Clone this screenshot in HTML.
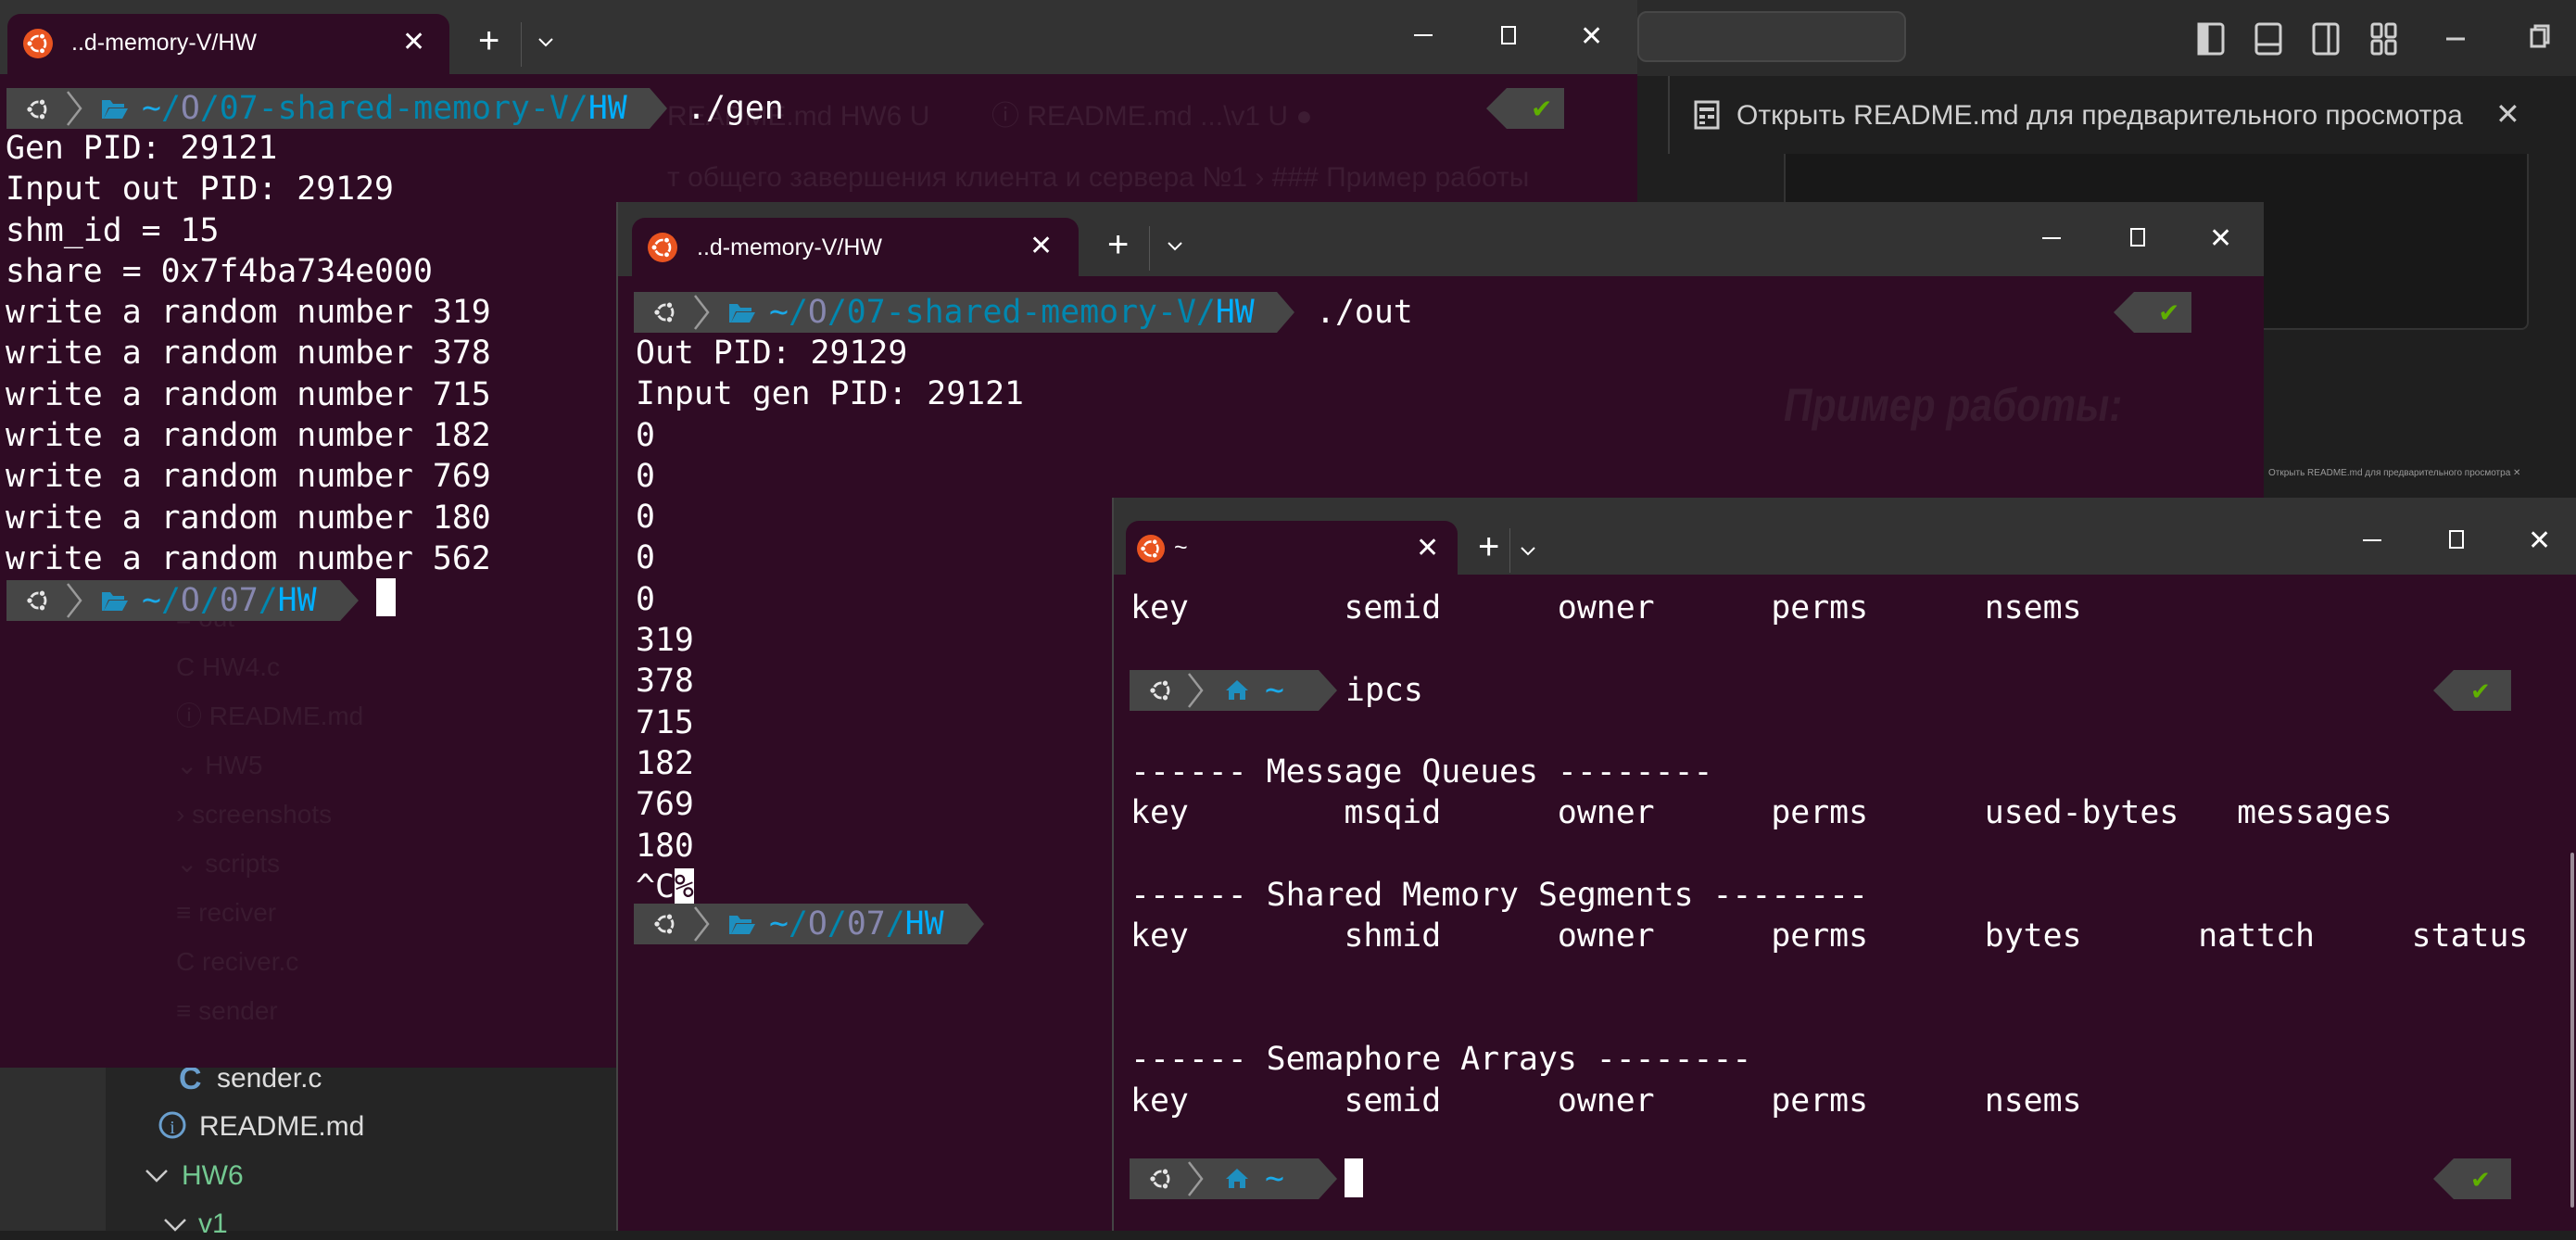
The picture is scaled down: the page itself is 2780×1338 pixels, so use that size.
<!DOCTYPE html>
<html><head><meta charset="utf-8"><style>
*{margin:0;padding:0;box-sizing:border-box}
body{width:2780px;height:1328px;overflow:hidden;background:#1f1f1f;position:relative;font-family:"Liberation Sans",sans-serif}
.abs{position:absolute}
.win{position:absolute;background:#2f0b24;overflow:hidden}
.tb{position:absolute;left:0;top:0;right:0;height:80px;background:#333333}
.tab{position:absolute;background:#2f0b24;border-radius:14px 14px 0 0}
.tt{position:absolute;color:#fff;font-size:25px;font-family:"Liberation Sans",sans-serif}
.mono{font-family:"DejaVu Sans Mono","Liberation Mono",monospace;font-size:34.8px;color:#fff;white-space:pre;line-height:44.3px}
.gx{position:absolute;color:#fff;font-size:30px;font-weight:300}
</style></head><body>

<div class="abs" style="left:1767px;top:0;width:1013px;height:82px;background:#2b2b2b"></div>
<div class="abs" style="left:1767px;top:12px;width:290px;height:55px;background:#383838;border:2px solid #474747;border-radius:10px"></div>
<svg class="abs" style="left:2370px;top:22px" width="400" height="40" viewBox="0 0 400 40">
<g fill="none" stroke="#cfcfcf" stroke-width="3">
<rect x="3" y="4" width="26" height="32" rx="3"/><rect x="3" y="4" width="9" height="32" fill="#cfcfcf"/>
<rect x="65" y="4" width="26" height="32" rx="3"/><line x1="65" y1="26" x2="91" y2="26"/>
<rect x="127" y="4" width="26" height="32" rx="3"/><line x1="143" y1="4" x2="143" y2="36"/>
<rect x="190" y="4" width="10" height="14" rx="2"/><rect x="190" y="22" width="10" height="14" rx="2"/><rect x="205" y="4" width="10" height="14" rx="2"/><rect x="205" y="22" width="10" height="14" rx="2"/>
<line x1="270" y1="20" x2="290" y2="20"/>
<rect x="362" y="10" width="14" height="18"/><path d="M366 10 V6 H380 V24 H376"/>
</g></svg>
<div class="abs" style="left:1800px;top:82px;width:940px;height:84px;background:#1f1f1f;border-left:2px solid #3a3a3a"></div>
<svg class="abs" style="left:1828px;top:108px" width="28" height="32" viewBox="0 0 28 32"><rect x="2" y="2" width="24" height="28" fill="none" stroke="#ccc" stroke-width="3"/><rect x="6" y="8" width="16" height="4" fill="#ccc"/><rect x="6" y="16" width="6" height="4" fill="#ccc"/><rect x="15" y="16" width="7" height="4" fill="#ccc"/><rect x="6" y="23" width="6" height="3" fill="#ccc"/></svg>
<div class="abs" style="left:1874px;top:108px;color:#d0d0d0;font-size:30px">Открыть README.md для предварительного просмотра</div>
<div class="abs" style="left:2693px;top:104px;color:#ccc;font-size:32px">✕</div>
<div class="abs" style="left:1925px;top:166px;width:804px;height:190px;background:#181818;border:2px solid #333;border-top:none;border-radius:0 0 8px 8px"></div>
<div class="abs" style="left:2448px;top:505px;color:#999;font-size:10px">Открыть README.md для предварительного просмотра ✕</div>

<div class="abs" style="left:0;top:1150px;width:114px;height:178px;background:#2f2f2f"></div>
<div class="abs" style="left:114px;top:1150px;width:560px;height:178px;background:#252525"></div>
<div class="abs" style="left:193px;top:1145px;color:#6a9fce;font-size:34px;font-weight:bold">C</div>
<div class="abs" style="left:234px;top:1147px;color:#ddd;font-size:30px">sender.c</div>
<svg class="abs" style="left:170px;top:1198px" width="32" height="32"><circle cx="16" cy="16" r="13" fill="none" stroke="#6a9fce" stroke-width="3"/><text x="16" y="25" fill="#6a9fce" font-size="20" text-anchor="middle" font-family="Liberation Serif">i</text></svg>
<div class="abs" style="left:215px;top:1199px;color:#ddd;font-size:30px">README.md</div>
<svg class="abs" style="left:155px;top:1260px" width="28" height="18"><path d="M3 3 L14 14 L25 3" fill="none" stroke="#ccc" stroke-width="2.5"/></svg>
<div class="abs" style="left:196px;top:1252px;color:#73c991;font-size:30px">HW6</div>
<svg class="abs" style="left:175px;top:1313px" width="28" height="18"><path d="M3 3 L14 14 L25 3" fill="none" stroke="#ccc" stroke-width="2.5"/></svg>
<div class="abs" style="left:214px;top:1304px;color:#73c991;font-size:30px">v1</div>

<!-- WINDOW 1 -->
<div class="win" style="left:0;top:0;width:1767px;height:1152px">
 <div class="tb"></div>
 <div class="tab" style="left:8px;top:15px;width:477px;height:65px"></div>
 <svg class="abs" style="left:25px;top:31px" width="32" height="32" viewBox="-16 -16 32 32"><circle r="16" fill="#e95420"/><circle r="8" fill="none" stroke="#fff" stroke-width="2.6"/><g fill="#fff" stroke="#e95420" stroke-width="1.5"><circle cx="-9" cy="0" r="3.2"/><circle cx="4.5" cy="-7.8" r="3.2"/><circle cx="4.5" cy="7.8" r="3.2"/></g></svg>
 <div class="tt" style="left:77px;top:32px">..d-memory-V/HW</div>
 <div class="gx" style="left:434px;top:28px">✕</div>
 <div class="gx" style="left:516px;top:22px;font-size:40px">+</div>
 <div class="abs" style="left:562px;top:24px;width:1px;height:48px;background:#555"></div>
 <svg class="abs" style="left:580px;top:40px" width="18" height="12"><path d="M2 2 L9 9 L16 2" fill="none" stroke="#fff" stroke-width="2"/></svg>
 <div class="abs" style="left:1526px;top:37px;width:20px;height:2px;background:#fff"></div>
 <div class="abs" style="left:1620px;top:28px;width:16px;height:20px;border:2px solid #fff"></div>
 <div class="gx" style="left:1705px;top:22px">✕</div>
 <div class="abs" style="left:720px;top:100px;color:#3d1c33;font-size:30px;white-space:nowrap">README.md  HW6 U &nbsp;&nbsp;&nbsp;&nbsp;&nbsp;&nbsp; ⓘ README.md ...\v1 U ●</div>
 <div class="abs" style="left:720px;top:175px;color:#3d1c33;font-size:30px;white-space:nowrap">т общего завершения клиента и сервера №1 › ### Пример работы</div>
 <div class="abs" style="left:190px;top:640px;color:#3a1a30;font-size:28px;line-height:53px">≡ out<br>C HW4.c<br>ⓘ README.md<br>⌄ HW5<br>› screenshots<br>⌄ scripts<br>≡ reciver<br>C reciver.c<br>≡ sender</div>
 <svg class="abs" style="left:7px;top:95px" width="720" height="44"><polygon points="0,0 694,0 713,22 694,44 0,44" fill="#464646"/><path d="M66 4 L80 22 L66 40" fill="none" stroke="#9a9a9a" stroke-width="2.5"/></svg>
 <svg class="abs" style="left:26px;top:103px" width="30" height="30" viewBox="-15 -15 30 30"><circle r="8" fill="none" stroke="#e6e6e6" stroke-width="2.8"/><g fill="#e6e6e6" stroke="#464646" stroke-width="1.5"><circle cx="-9" cy="0" r="3.4"/><circle cx="4.5" cy="-7.8" r="3.4"/><circle cx="4.5" cy="7.8" r="3.4"/></g></svg>
 <svg class="abs" style="left:110px;top:106px" width="28" height="22"><path d="M0 2 H9 L12 6 H24 V10 H7 L2 22 H0Z M8 11 H28 L22 22 H2Z" fill="#1e8fbf"/></svg>
 <div class="mono abs" style="left:153px;top:95px"><span style="color:#1aa9e8">~</span><span style="color:#0087af">/</span><span style="color:#8787af">O</span><span style="color:#0087af">/07-shared-memory-V/</span><span style="color:#00afff">HW</span></div>
 <div class="mono abs" style="left:741px;top:95px">./gen</div>
 <svg class="abs" style="left:1604px;top:95px" width="84" height="44"><polygon points="0,22 22,0 84,0 84,44 22,44" fill="#464646"/><text x="48" y="32" fill="#5faf00" font-size="28" font-family="DejaVu Sans">✔</text></svg>
 <div class="mono abs" style="left:6px;top:138px">Gen PID: 29121
Input out PID: 29129
shm_id = 15
share = 0x7f4ba734e000
write a random number 319
write a random number 378
write a random number 715
write a random number 182
write a random number 769
write a random number 180
write a random number 562</div>
 <svg class="abs" style="left:7px;top:626px" width="390" height="44"><polygon points="0,0 360,0 380,22 360,44 0,44" fill="#464646"/><path d="M66 4 L80 22 L66 40" fill="none" stroke="#9a9a9a" stroke-width="2.5"/></svg>
 <svg class="abs" style="left:26px;top:633px" width="30" height="30" viewBox="-15 -15 30 30"><circle r="8" fill="none" stroke="#e6e6e6" stroke-width="2.8"/><g fill="#e6e6e6" stroke="#464646" stroke-width="1.5"><circle cx="-9" cy="0" r="3.4"/><circle cx="4.5" cy="-7.8" r="3.4"/><circle cx="4.5" cy="7.8" r="3.4"/></g></svg>
 <svg class="abs" style="left:110px;top:637px" width="28" height="22"><path d="M0 2 H9 L12 6 H24 V10 H7 L2 22 H0Z M8 11 H28 L22 22 H2Z" fill="#1e8fbf"/></svg>
 <div class="mono abs" style="left:153px;top:626px"><span style="color:#1aa9e8">~</span><span style="color:#0087af">/</span><span style="color:#8787af">O</span><span style="color:#0087af">/</span><span style="color:#8787af">07</span><span style="color:#0087af">/</span><span style="color:#00afff">HW</span></div>
 <div class="abs" style="left:406px;top:624px;width:21px;height:41px;background:#fff"></div>
</div>

<!-- WINDOW 2 -->
<div class="win" style="left:665px;top:218px;width:1778px;height:1110px;border-left:2px solid #444">
 <div class="tb"></div>
 <div class="tab" style="left:15px;top:17px;width:482px;height:63px"></div>
 <svg class="abs" style="left:32px;top:33px" width="32" height="32" viewBox="-16 -16 32 32"><circle r="16" fill="#e95420"/><circle r="8" fill="none" stroke="#fff" stroke-width="2.6"/><g fill="#fff" stroke="#e95420" stroke-width="1.5"><circle cx="-9" cy="0" r="3.2"/><circle cx="4.5" cy="-7.8" r="3.2"/><circle cx="4.5" cy="7.8" r="3.2"/></g></svg>
 <div class="tt" style="left:85px;top:35px">..d-memory-V/HW</div>
 <div class="gx" style="left:444px;top:30px">✕</div>
 <div class="gx" style="left:528px;top:24px;font-size:40px">+</div>
 <div class="abs" style="left:573px;top:26px;width:1px;height:48px;background:#555"></div>
 <svg class="abs" style="left:592px;top:42px" width="18" height="12"><path d="M2 2 L9 9 L16 2" fill="none" stroke="#fff" stroke-width="2"/></svg>
 <div class="abs" style="left:1537px;top:38px;width:20px;height:2px;background:#fff"></div>
 <div class="abs" style="left:1632px;top:28px;width:16px;height:20px;border:2px solid #fff"></div>
 <div class="gx" style="left:1717px;top:22px">✕</div>
 <div class="abs" style="left:1258px;top:190px;color:#3a1a30;font-size:50px;font-style:italic;font-weight:bold;white-space:nowrap;transform:scaleX(0.85);transform-origin:left">Пример работы:</div>
 <svg class="abs" style="left:17px;top:97px" width="720" height="44"><polygon points="0,0 694,0 713,22 694,44 0,44" fill="#464646"/><path d="M66 4 L80 22 L66 40" fill="none" stroke="#9a9a9a" stroke-width="2.5"/></svg>
 <svg class="abs" style="left:36px;top:104px" width="30" height="30" viewBox="-15 -15 30 30"><circle r="8" fill="none" stroke="#e6e6e6" stroke-width="2.8"/><g fill="#e6e6e6" stroke="#464646" stroke-width="1.5"><circle cx="-9" cy="0" r="3.4"/><circle cx="4.5" cy="-7.8" r="3.4"/><circle cx="4.5" cy="7.8" r="3.4"/></g></svg>
 <svg class="abs" style="left:120px;top:108px" width="28" height="22"><path d="M0 2 H9 L12 6 H24 V10 H7 L2 22 H0Z M8 11 H28 L22 22 H2Z" fill="#1e8fbf"/></svg>
 <div class="mono abs" style="left:163px;top:97px"><span style="color:#1aa9e8">~</span><span style="color:#0087af">/</span><span style="color:#8787af">O</span><span style="color:#0087af">/07-shared-memory-V/</span><span style="color:#00afff">HW</span></div>
 <div class="mono abs" style="left:753px;top:97px">./out</div>
 <svg class="abs" style="left:1614px;top:97px" width="84" height="44"><polygon points="0,22 22,0 84,0 84,44 22,44" fill="#464646"/><text x="48" y="32" fill="#5faf00" font-size="28" font-family="DejaVu Sans">✔</text></svg>
 <div class="mono abs" style="left:19px;top:141px">Out PID: 29129
Input gen PID: 29121
0
0
0
0
0
319
378
715
182
769
180
^C<span style="background:#fff;color:#2f0b24">%</span></div>
 <svg class="abs" style="left:17px;top:757px" width="400" height="44"><polygon points="0,0 360,0 378,22 360,44 0,44" fill="#464646"/><path d="M66 4 L80 22 L66 40" fill="none" stroke="#9a9a9a" stroke-width="2.5"/></svg>
 <svg class="abs" style="left:36px;top:764px" width="30" height="30" viewBox="-15 -15 30 30"><circle r="8" fill="none" stroke="#e6e6e6" stroke-width="2.8"/><g fill="#e6e6e6" stroke="#464646" stroke-width="1.5"><circle cx="-9" cy="0" r="3.4"/><circle cx="4.5" cy="-7.8" r="3.4"/><circle cx="4.5" cy="7.8" r="3.4"/></g></svg>
 <svg class="abs" style="left:120px;top:768px" width="28" height="22"><path d="M0 2 H9 L12 6 H24 V10 H7 L2 22 H0Z M8 11 H28 L22 22 H2Z" fill="#1e8fbf"/></svg>
 <div class="mono abs" style="left:163px;top:757px"><span style="color:#1aa9e8">~</span><span style="color:#0087af">/</span><span style="color:#8787af">O</span><span style="color:#0087af">/</span><span style="color:#8787af">07</span><span style="color:#0087af">/</span><span style="color:#00afff">HW</span></div>
</div>

<!-- WINDOW 3 -->
<div class="win" style="left:1200px;top:537px;width:1580px;height:791px;border-left:2px solid #444">
 <div class="tb" style="height:83px"></div>
 <div class="tab" style="left:13px;top:25px;width:358px;height:60px"></div>
 <svg class="abs" style="left:25px;top:40px" width="30" height="30" viewBox="-16 -16 32 32"><circle r="16" fill="#e95420"/><circle r="8" fill="none" stroke="#fff" stroke-width="2.6"/><g fill="#fff" stroke="#e95420" stroke-width="1.5"><circle cx="-9" cy="0" r="3.2"/><circle cx="4.5" cy="-7.8" r="3.2"/><circle cx="4.5" cy="7.8" r="3.2"/></g></svg>
 <div class="tt" style="left:65px;top:40px">~</div>
 <div class="gx" style="left:326px;top:37px">✕</div>
 <div class="gx" style="left:393px;top:31px;font-size:40px">+</div>
 <div class="abs" style="left:427px;top:33px;width:1px;height:48px;background:#555"></div>
 <svg class="abs" style="left:438px;top:52px" width="18" height="12"><path d="M2 2 L9 9 L16 2" fill="none" stroke="#fff" stroke-width="2"/></svg>
 <div class="abs" style="left:1348px;top:45px;width:20px;height:2px;background:#fff"></div>
 <div class="abs" style="left:1441px;top:35px;width:16px;height:20px;border:2px solid #fff"></div>
 <div class="gx" style="left:1526px;top:29px">✕</div>
 <div class="mono abs" style="left:18px;top:97px">key        semid      owner      perms      nsems



------ Message Queues --------
key        msqid      owner      perms      used-bytes   messages

------ Shared Memory Segments --------
key        shmid      owner      perms      bytes      nattch     status


------ Semaphore Arrays --------
key        semid      owner      perms      nsems</div>
 <svg class="abs" style="left:17px;top:186px" width="240" height="44"><polygon points="0,0 204,0 224,22 204,44 0,44" fill="#464646"/><path d="M64 4 L78 22 L64 40" fill="none" stroke="#9a9a9a" stroke-width="2.5"/></svg>
 <svg class="abs" style="left:36px;top:193px" width="30" height="30" viewBox="-15 -15 30 30"><circle r="8" fill="none" stroke="#e6e6e6" stroke-width="2.8"/><g fill="#e6e6e6" stroke="#464646" stroke-width="1.5"><circle cx="-9" cy="0" r="3.4"/><circle cx="4.5" cy="-7.8" r="3.4"/><circle cx="4.5" cy="7.8" r="3.4"/></g></svg>
 <svg class="abs" style="left:120px;top:196px" width="26" height="22"><path d="M13 1 L1 12 H4 V22 H10 V15 H16 V22 H22 V12 H25Z" fill="#1e8fbf"/></svg>
 <div class="mono abs" style="left:163px;top:186px;color:#1aa9e8">~</div>
 <div class="mono abs" style="left:250px;top:186px">ipcs</div>
 <svg class="abs" style="left:1424px;top:186px" width="84" height="44"><polygon points="0,22 22,0 84,0 84,44 22,44" fill="#464646"/><text x="40" y="32" fill="#5faf00" font-size="26" font-family="DejaVu Sans">✔</text></svg>
 <svg class="abs" style="left:17px;top:713px" width="240" height="44"><polygon points="0,0 204,0 224,22 204,44 0,44" fill="#464646"/><path d="M64 4 L78 22 L64 40" fill="none" stroke="#9a9a9a" stroke-width="2.5"/></svg>
 <svg class="abs" style="left:36px;top:720px" width="30" height="30" viewBox="-15 -15 30 30"><circle r="8" fill="none" stroke="#e6e6e6" stroke-width="2.8"/><g fill="#e6e6e6" stroke="#464646" stroke-width="1.5"><circle cx="-9" cy="0" r="3.4"/><circle cx="4.5" cy="-7.8" r="3.4"/><circle cx="4.5" cy="7.8" r="3.4"/></g></svg>
 <svg class="abs" style="left:120px;top:723px" width="26" height="22"><path d="M13 1 L1 12 H4 V22 H10 V15 H16 V22 H22 V12 H25Z" fill="#1e8fbf"/></svg>
 <div class="mono abs" style="left:163px;top:713px;color:#1aa9e8">~</div>
 <div class="abs" style="left:249px;top:713px;width:20px;height:42px;background:#fff"></div>
 <svg class="abs" style="left:1424px;top:713px" width="84" height="44"><polygon points="0,22 22,0 84,0 84,44 22,44" fill="#464646"/><text x="40" y="32" fill="#5faf00" font-size="26" font-family="DejaVu Sans">✔</text></svg>
 <div class="abs" style="left:1572px;top:383px;width:4px;height:383px;background:#9a8a96;border-radius:2px"></div>
</div>
</body></html>
